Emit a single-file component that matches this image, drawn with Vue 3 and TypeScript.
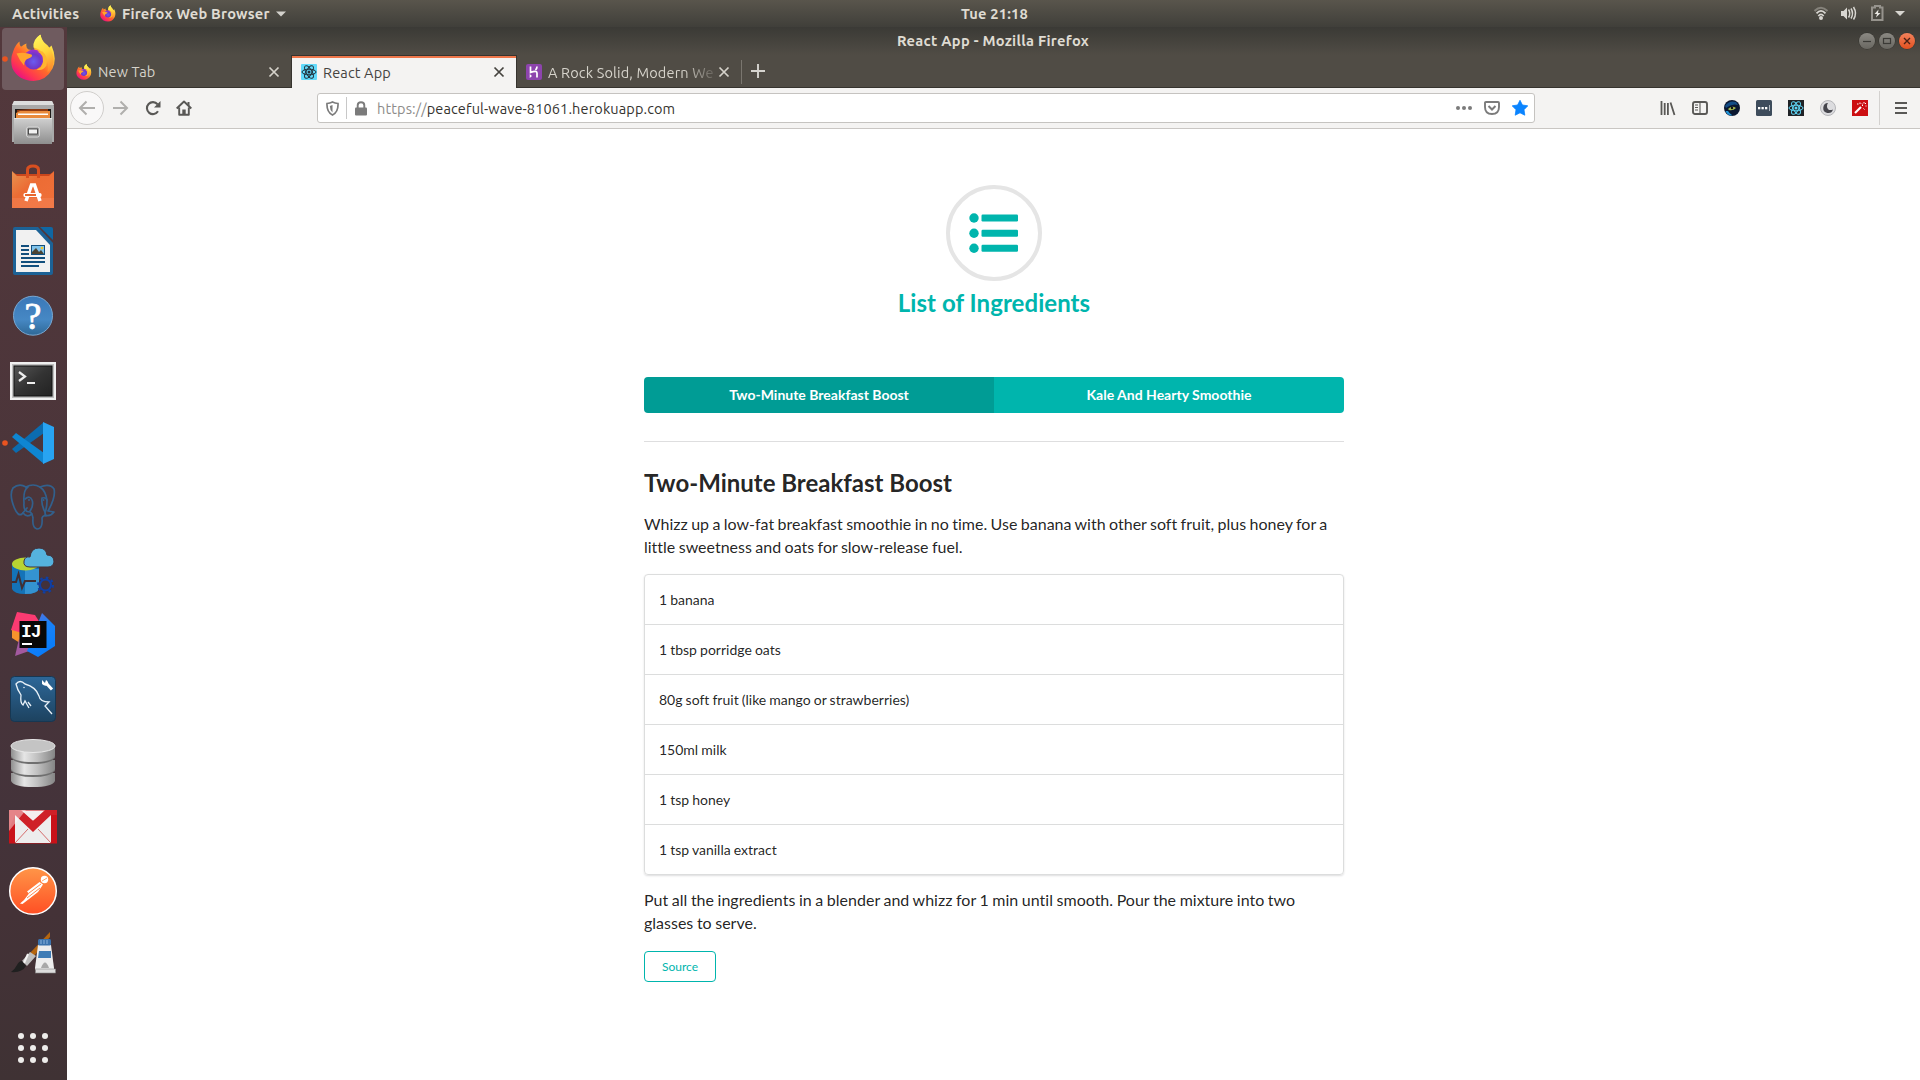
<script setup lang="ts">
interface Recipe {
  name: string
  summary: string
  ingredients: string[]
  method: string
}

const recipe: Recipe = {
  name: 'Two-Minute Breakfast Boost',
  summary:
    'Whizz up a low-fat breakfast smoothie in no time. Use banana with other soft fruit, plus honey for a little sweetness and oats for slow-release fuel.',
  ingredients: [
    '1 banana',
    '1 tbsp porridge oats',
    '80g soft fruit (like mango or strawberries)',
    '150ml milk',
    '1 tsp honey',
    '1 tsp vanilla extract',
  ],
  method:
    'Put all the ingredients in a blender and whizz for 1 min until smooth. Pour the mixture into two glasses to serve.',
}

const choices: string[] = [recipe.name, 'Kale And Hearty Smoothie']
const gridDots: number[] = [21, 33, 45]
</script>

<template>
  <div class="desktop">
    <svg width="0" height="0" class="defs">
      <defs>
        <linearGradient id="fxBody" x1="0.85" y1="0.1" x2="0.2" y2="0.95">
          <stop offset="0" stop-color="#fff44f" />
          <stop offset="0.3" stop-color="#ffb932" />
          <stop offset="0.55" stop-color="#ff6a2a" />
          <stop offset="0.8" stop-color="#ff3750" />
          <stop offset="1" stop-color="#e80f85" />
        </linearGradient>
        <linearGradient id="fxFlame" x1="0.3" y1="0" x2="0.6" y2="1">
          <stop offset="0" stop-color="#fff65a" />
          <stop offset="0.5" stop-color="#ffd53c" />
          <stop offset="1" stop-color="#ff8a2c" />
        </linearGradient>
        <radialGradient id="fxGlobe" cx="0.5" cy="0.6" r="0.6">
          <stop offset="0" stop-color="#6a5cf0" />
          <stop offset="0.6" stop-color="#6f38c8" />
          <stop offset="1" stop-color="#a22fd0" />
        </radialGradient>
        <symbol id="firefox" viewBox="0 0 46 47">
          <path d="M3 16 Q5 10 9 7 Q9 12 11 12 Q13 10 16 9 Q15 13 18 15 L24 16 Q22 6 30 0 Q31 7 37 11 L38 14 L41 11 Q47 24 42 34 Q36 46 23 46.500 Q8 46 2 34 Q-1 25 3 16Z" fill="url(#fxBody)" />
          <path d="M23 13 Q22 5 30 0 Q31 7 37 11 Q42 15 43 24 Q44 32 37 38 Q39 29 34 21 Q30 14 23 13Z" fill="url(#fxFlame)" />
          <circle cx="23" cy="25" r="10" fill="url(#fxGlobe)" />
          <path d="M6 19 Q13 17 21 20 Q23 22 18 24 Q14 25 13.500 31 Q9 26 6 19Z" fill="#ffa52d" />
          <path d="M27 17 Q33 20 32.500 27 Q32 33 26 35 Q32 37 36 31 Q38 22 32 17Z" fill="#ffb52f" />
        </symbol>
        <symbol id="atom" viewBox="0 0 16 16">
          <g fill="none" stroke="currentColor" stroke-width="1">
            <ellipse cx="8" cy="8" rx="7" ry="2.800" />
            <ellipse cx="8" cy="8" rx="7" ry="2.800" transform="rotate(60 8 8)" />
            <ellipse cx="8" cy="8" rx="7" ry="2.800" transform="rotate(120 8 8)" />
          </g>
          <circle cx="8" cy="8" r="1.500" fill="currentColor" />
        </symbol>
        <symbol id="cross" viewBox="0 0 12 12">
          <path d="M1.500 1.500 L10.500 10.500 M10.500 1.500 L1.500 10.500" stroke="currentColor" stroke-width="1.700" fill="none" />
        </symbol>
        <linearGradient id="grey" x1="0" y1="0" x2="0" y2="1"><stop offset="0" stop-color="#d0d0d0" /><stop offset="1" stop-color="#8e8e8e" /></linearGradient>
        <linearGradient id="metal" x1="0" y1="0" x2="1" y2="0"><stop offset="0" stop-color="#8f8f8f" /><stop offset="0.3" stop-color="#e6e6e6" /><stop offset="0.6" stop-color="#c0c0c0" /><stop offset="1" stop-color="#858585" /></linearGradient>
        <linearGradient id="bag" x1="0" y1="0" x2="1" y2="1"><stop offset="0" stop-color="#e89350" /><stop offset="0.4" stop-color="#ec6c34" /><stop offset="1" stop-color="#f0703a" /></linearGradient>
        <linearGradient id="help" x1="0" y1="0" x2="0" y2="1"><stop offset="0" stop-color="#3a78b8" /><stop offset="0.6" stop-color="#4688c4" /><stop offset="1" stop-color="#2e6896" /></linearGradient>
        <linearGradient id="term" x1="0" y1="0" x2="1" y2="1"><stop offset="0" stop-color="#555" /><stop offset="0.5" stop-color="#333" /><stop offset="1" stop-color="#222" /></linearGradient>
        <linearGradient id="mysql" x1="0" y1="0" x2="0" y2="1"><stop offset="0" stop-color="#2d6798" /><stop offset="1" stop-color="#1d425f" /></linearGradient>
        <linearGradient id="postman" x1="0" y1="0" x2="0" y2="1"><stop offset="0" stop-color="#ff9648" /><stop offset="1" stop-color="#ff4f24" /></linearGradient>
        <linearGradient id="ijBlue" x1="0" y1="0" x2="0.5" y2="1"><stop offset="0" stop-color="#6a6ad0" /><stop offset="0.5" stop-color="#1a82f8" /><stop offset="1" stop-color="#087cfa" /></linearGradient>
      </defs>
    </svg>

    <header class="panel">
      <div class="panel-left">
        <span class="activities">Activities</span>
        <svg class="panel-fox" width="16" height="17"><use href="#firefox" /></svg>
        <span class="app-name">Firefox Web Browser</span>
        <svg class="caret" width="10" height="6" viewBox="0 0 10 6"><path d="M0 0.500H10L5 5.500Z" fill="#d3d1cc" /></svg>
      </div>
      <span class="clock">Tue 21:18</span>
      <div class="panel-right">
        <svg width="106" height="27" viewBox="0 0 106 27">
          <g fill="none">
            <path d="M0.500 11 Q7 4.500 13.500 11" stroke="#85827b" stroke-width="2" />
            <path d="M2.500 13.300 Q7 8.500 11.500 13.300" stroke="#d8d6d1" stroke-width="1.800" />
            <path d="M4.300 16 Q7 12.800 9.700 16" stroke="#d8d6d1" stroke-width="1.600" />
            <path d="M34.500 9.500 Q37 13.500 34.500 17.500 M37 8.500 Q40 13.500 37 18.500 M39.500 7 Q43.500 13.500 39.500 19.500" stroke="#d8d6d1" stroke-width="1.500" />
            <path d="M58 7.500 H61 V6 H66 V7.500 H68.500 V20 H58Z" stroke="#96938d" stroke-width="2" />
          </g>
          <circle cx="7" cy="18" r="2" fill="#d8d6d1" />
          <path d="M27 11 H29.500 L33 7.500 V19.500 L29.500 16 H27Z" fill="#d8d6d1" />
          <path d="M64.500 9.500 L60.500 14 H63 L62 17.500 L66.500 13 H64Z" fill="#e8e6e1" />
          <path d="M81 11 H91 L86 16Z" fill="#d8d6d1" />
        </svg>
      </div>
    </header>

    <div class="work">
      <nav class="dock">
        <svg class="app running focused" viewBox="0 0 67 64">
          <rect x="2" y="1" width="62" height="62" rx="4" fill="#6f5b5f" />
          <circle cx="5" cy="32" r="2.800" fill="#e95420" />
          <use href="#firefox" x="10.500" y="7.500" width="46" height="47" />
        </svg>
        <svg class="app" viewBox="0 0 67 64">
          <path d="M14 10 H52 L54 15 V51 H12 V15Z" fill="#a9a9a9" />
          <path d="M14 10 H52 L54 14 H12Z" fill="#ddd" />
          <rect x="15" y="18" width="36" height="12" fill="#1e1a18" />
          <path d="M17 19 L31 18 H48 V27 H17Z" fill="#8f3a12" />
          <path d="M16 22 L20 20 H50 V27 H16Z" fill="#e98a3c" />
          <rect x="18" y="22.500" width="30" height="1.500" fill="#fff" />
          <rect x="14" y="27" width="38" height="26" fill="url(#grey)" />
          <rect x="14" y="27" width="38" height="1" fill="#e6e6e6" />
          <rect x="26.500" y="36" width="13" height="10" rx="2" fill="#999" stroke="#d8d8d8" />
          <rect x="28.500" y="38" width="9" height="5" fill="#f2f2f2" stroke="#333" stroke-width="0.800" />
        </svg>
        <svg class="app" viewBox="0 0 67 64">
          <path d="M12 17 L16 19 H50 L54 17 V23 H12Z" fill="#c9461c" />
          <path d="M12 16 L17 21 H49 L54 16 V53 H12Z" fill="url(#bag)" />
          <rect x="12" y="43" width="42" height="10" fill="#f58a5e" opacity="0.400" />
          <path d="M27.500 23 V15 Q27.500 11 33 11 Q38.500 11 38.500 15 V23" fill="none" stroke="#d84f20" stroke-width="3" />
          <path d="M26 46 L31.500 30 H34.500 L40 46" fill="none" stroke="#fff" stroke-width="3.500" />
          <rect x="23.500" y="38" width="18" height="4" rx="1.500" fill="#fff" />
          <rect x="25" y="39" width="11" height="2" fill="#e8682f" />
        </svg>
        <svg class="app" viewBox="0 0 67 64">
          <path d="M15 8 H38 L53 24 V54 Q53 56 51 56 H15 Q13 56 13 54 V10 Q13 8 15 8Z" fill="#1c6296" />
          <path d="M16 11 H36 L50 26 V53 H16Z" fill="#f1f1f1" />
          <path d="M40 8 H51 Q53 8 53 10 V21Z" fill="#0f67a3" />
          <g fill="#124f7d">
            <rect x="21" y="26" width="8" height="2" /><rect x="21" y="30" width="8" height="2" /><rect x="21" y="34" width="8" height="2" />
            <rect x="21" y="38" width="24" height="2" /><rect x="21" y="42" width="24" height="2" /><rect x="21" y="46" width="18" height="2" />
            <rect x="31" y="26" width="14" height="10" />
          </g>
          <rect x="32" y="27" width="12" height="8" fill="#80c3ea" />
          <path d="M32 35 V33 L36 29 L39 33 L41 31 L44 35Z" fill="#4b4434" /><circle cx="42" cy="29" r="1.300" fill="#f3c623" />
        </svg>
        <svg class="app" viewBox="0 0 67 64">
          <circle cx="33" cy="32.700" r="19.500" fill="url(#help)" stroke="#79a8d2" stroke-width="1" />
          <text x="33" y="45.500" text-anchor="middle" class="help-mark">?</text>
        </svg>
        <svg class="app" viewBox="0 0 67 64">
          <rect x="10" y="15" width="46" height="38" rx="1" fill="#bebebe" />
          <rect x="11" y="16" width="44" height="36" fill="none" stroke="#f0f0f0" stroke-width="2" />
          <rect x="14" y="19" width="38" height="30" fill="url(#term)" stroke="#111" />
          <path d="M19 25 L25 29.500 L19 34" fill="none" stroke="#eee" stroke-width="2.200" />
          <rect x="27" y="35" width="8" height="2" fill="#eee" />
        </svg>
        <svg class="app running" viewBox="0 0 67 64">
          <circle cx="5" cy="32" r="2.800" fill="#e95420" />
          <path d="M12 38 L16 42 L44 22 V11Z" fill="#0b6cb0" />
          <path d="M12 26 L16 22 L44 42 V53Z" fill="#0e86d2" />
          <path d="M43 11 L54 16 V48 L43 53 Z" fill="#28a4f2" />
        </svg>
        <svg class="app" viewBox="0 0 67 64">
          <g fill="none" stroke="#32608c" stroke-width="1.700" stroke-linejoin="round" stroke-linecap="round">
            <path d="M26 12 Q19 8 13 13 Q9 19 14 32 Q18 42 22 39 L27 33" />
            <path d="M26 12 Q33 8 40 12 Q46 16 47 26 Q47 32 45 38 L46 41 Q43 40 42 43 Q43 54 37 54 Q32 53 33 43 Q32 38 30 37 Q23 37 24 28 Q23 15 28 12" />
            <path d="M40 12 Q50 8 54 14 Q56 22 48 36 L54 37 Q50 42 45 40" />
            <path d="M25 24 Q30 20 32 25 Q34 30 30 36" />
            <path d="M42 23 Q46 22 47 25 M42 23 Q41 30 45 37" />
            <path d="M23 38 Q27 43 32 39" />
          </g>
          <circle cx="29" cy="25" r="1" fill="#32608c" /><circle cx="43.500" cy="25" r="1" fill="#32608c" />
        </svg>
        <svg class="app" viewBox="0 0 67 64">
          <path d="M12 24 V50 Q14 55 25 55 Q38 55 39 49 V24Z" fill="#1473b8" />
          <path d="M25 30 H39 V49 Q38 55 25 55Z" fill="#3c9bd8" opacity="0.800" />
          <ellipse cx="25.500" cy="25" rx="13.500" ry="6.500" fill="#b8d432" />
          <path d="M12 43 H16 L18.500 35 L22 49 L25 42 H36" fill="none" stroke="#402f34" stroke-width="2" />
          <path d="M30 28 Q23 28 24 22 Q25 17 30 18 Q31 9 39 9 Q46 9 47 16 Q54 16 54 23 Q53 28 48 28Z" fill="#55b2de" stroke="#43313a" stroke-width="1" />
          <circle cx="45.500" cy="46" r="7" fill="#43313a" />
          <circle cx="45.500" cy="46" r="5.500" fill="none" stroke="#0f3fa4" stroke-width="2" />
          <circle cx="45.500" cy="46" r="7.400" fill="none" stroke="#0f3fa4" stroke-width="2.200" stroke-dasharray="2.600 3.212" />
        </svg>
        <svg class="app" viewBox="0 0 67 64">
          <path d="M17 9 L35 12 L42 23 L19 31 L11 27Z" fill="#fc3b72" />
          <path d="M12 27 L22 30 L20 40 L12 35Z" fill="#f6942c" />
          <path d="M19 36 L15 53 L32 47Z" fill="#a3599f" />
          <path d="M42 10 L55 23 V43 L38 54 L27 48 L38 20Z" fill="url(#ijBlue)" />
          <rect x="19.500" y="18" width="27" height="27" fill="#080808" />
          <rect x="22" y="40" width="10" height="2" fill="#fff" />
          <text x="21" y="33.500" class="ij-mark">IJ</text>
        </svg>
        <svg class="app" viewBox="0 0 67 64">
          <rect x="10.500" y="9.500" width="45" height="45" rx="4" fill="url(#mysql)" stroke="#173752" />
          <path d="M29 42 L25 35 L23 39 Q20 37 21 29 Q17 23 16 18 Q20 13 25 18 Q36 21 39 30 Q40 36 49 36 L45 40 L52 48 M31 40 L28 36" transform="translate(0,-1)" fill="none" stroke="#e8f1f8" stroke-width="1.300" />
          <path d="M46 16 L52 22.500" stroke="#fff" stroke-width="3" fill="none" />
          <path d="M42 13 L45 16 L46 13 Q49 15 48 18 Q45 20 42 17Z" fill="#fff" />
          <circle cx="24" cy="20.500" r="0.700" fill="#fff" />
        </svg>
        <svg class="app" viewBox="0 0 67 64">
          <path d="M11 42 V50 Q14 56 33 56 Q52 56 55 50 V42Z" fill="url(#metal)" />
          <path d="M11 40 Q16 46 33 46 Q50 46 55 40 V37 H11Z" fill="#6f6f6f" />
          <path d="M11 29 V38 Q14 44 33 44 Q52 44 55 38 V29Z" fill="url(#metal)" />
          <path d="M11 27 Q16 33 33 33 Q50 33 55 27 V24 H11Z" fill="#6f6f6f" />
          <path d="M11 15 V25 Q14 31 33 31 Q52 31 55 25 V15Z" fill="url(#metal)" />
          <ellipse cx="33" cy="15" rx="22" ry="6.500" fill="#c4c4c4" stroke="#e8e8e8" stroke-width="1" />
        </svg>
        <svg class="app" viewBox="0 0 67 64">
          <rect x="9" y="15" width="48" height="33.500" fill="#c91219" />
          <path d="M15 19 L33 33 L51 19 V48 H15Z" fill="#ededed" />
          <path d="M20 15.500 H46 L33 26Z" fill="#f5eeee" />
          <path d="M15 48 L28 34 M51 48 L38 34" stroke="#d56b6b" stroke-width="1" />
          <path d="M9 15 H21 L33 26 L45 15 H57 V20 L51 20 L33 37 L15 20 L9 34Z" fill="#cf2027" />
          <path d="M9 15 H26 L9 36Z" fill="#fff" opacity="0.450" />
        </svg>
        <svg class="app" viewBox="0 0 67 64">
          <circle cx="33" cy="32" r="23.300" fill="url(#postman)" stroke="#fff" stroke-width="1.500" />
          <circle cx="44.500" cy="20.500" r="3.700" fill="#fff" />
          <path d="M42 22 L47 19" stroke="#ff8d45" stroke-width="0.800" />
          <path d="M39.500 23 L27 32.500 L29 34.500 L24 41 L20 44.500 L22.500 45 L29 40 L38 33 L43 25.500Z" fill="#fff" />
          <path d="M29 34 L41 25 M27 39 L40 29" stroke="#ff7b3a" stroke-width="0.900" />
        </svg>
        <svg class="app" viewBox="0 0 67 64">
          <path d="M50 9 L30 30 L34 33 L50 14Z" fill="#b4650f" />
          <path d="M30 29 L36 33 L27 43 L22 38Z" fill="#bebebe" />
          <path d="M28 31 L24 40" stroke="#f4f4f4" stroke-width="2" />
          <path d="M22 38 L26 43 Q22 50 11 49 Q15 46 17 42 Q19 38 22 38Z" fill="#202020" />
          <path d="M38 22 H51 L54 45 V47 H35 V45Z" fill="#ededed" />
          <rect x="38" y="16" width="13" height="6.500" rx="1.500" fill="#3b73ad" />
          <path d="M41 17 V21 M44 17 V21 M47 17 V21" stroke="#8db4dc" stroke-width="1" />
          <path d="M39 28 H51 V35 H38Z" fill="#3f7cb5" />
          <path d="M41 45 Q45 34 49 45Z" fill="#a8a8a8" />
          <rect x="35.500" y="46" width="20" height="4" fill="#ddd" stroke="#888" stroke-width="0.600" />
        </svg>
        <svg class="show-apps" viewBox="0 0 67 64">
          <template v-for="gx in gridDots" :key="gx">
            <circle v-for="gy in gridDots" :key="gy" :cx="gx" :cy="gy - 1" r="3" fill="#eeedeb" />
          </template>
        </svg>
      </nav>

      <main class="browser">
        <div class="titlebar">
          <span class="window-title">React App - Mozilla Firefox</span>
          <div class="controls">
            <span class="ctl"><svg viewBox="0 0 16 16"><path d="M4 8.500H12" stroke="#3b3a36" stroke-width="1.200" /></svg></span>
            <span class="ctl"><svg viewBox="0 0 16 16"><rect x="4.500" y="5.500" width="7" height="5" fill="none" stroke="#3b3a36" stroke-width="1.200" /></svg></span>
            <span class="ctl close"><svg viewBox="0 0 16 16"><path d="M5 5L11 11M11 5L5 11" stroke="#4a2014" stroke-width="1.400" /></svg></span>
          </div>
        </div>

        <div class="tabs">
          <div class="tab first">
            <svg width="16" height="16"><use href="#firefox" /></svg>
            <span class="tab-label">New Tab</span>
            <svg class="x" width="12" height="12"><use href="#cross" /></svg>
          </div>
          <div class="tab active">
            <span class="react-fav"><svg width="16" height="16"><use href="#atom" /></svg></span>
            <span class="tab-label">React App</span>
            <svg class="x" width="12" height="12"><use href="#cross" /></svg>
          </div>
          <div class="tab third">
            <svg width="16" height="16" viewBox="0 0 16 16"><rect width="16" height="16" rx="2" fill="#8d44ad" /><path d="M4.500 2.500V8.500Q11 6 11 9V13.500M11 2.500Q11 4.500 9.500 6" fill="none" stroke="#fff" stroke-width="1.700" /><path d="M3.700 10V14L6 12Z" fill="#fff" /></svg>
            <span class="tab-label faded">A Rock Solid, Modern We</span>
            <svg class="x" width="12" height="12"><use href="#cross" /></svg>
          </div>
          <svg class="plus" width="14" height="14" viewBox="0 0 14 14"><path d="M7 0V14M0 7H14" stroke="#d6d4cf" stroke-width="1.900" /></svg>
        </div>

        <div class="toolbar">
          <div class="nav-buttons">
            <span class="back"><svg width="18" height="16" viewBox="0 0 18 16"><path d="M17 8H2M8.500 1.500L2 8L8.500 14.500" fill="none" stroke="#b0afad" stroke-width="2" /></svg></span>
            <svg class="forward" width="18" height="16" viewBox="0 0 18 16"><path d="M1 8H15M8.500 1.500L15 8L8.500 14.500" fill="none" stroke="#b0afad" stroke-width="2" /></svg>
            <svg class="reload" width="16" height="16" viewBox="0 0 16 16"><path d="M13 11.300A6 6 0 1 1 12.500 4.200" fill="none" stroke="#595856" stroke-width="2.100" /><path d="M15.500 1V7.500H9Z" fill="#595856" /></svg>
            <svg class="home" width="16" height="16" viewBox="0 0 16 16"><path d="M0.700 8.500L8 1.500L15.300 8.500M3.200 7.500V14.700H12.800V7.500" fill="none" stroke="#595856" stroke-width="1.900" stroke-linejoin="round" /><path d="M6.300 15V9.500H9.700V15Z" fill="#595856" /><path d="M11.500 2H13.500V6L11.500 4Z" fill="#595856" /></svg>
          </div>
          <div class="urlbar">
            <svg class="shield" width="13" height="15" viewBox="0 0 13 15"><path d="M1 2.500Q4 2.300 6.500 1Q9 2.300 12 2.500Q12.500 11 6.500 14Q0.500 11 1 2.500Z" fill="none" stroke="#7b7b7b" stroke-width="1.700" /><path d="M6.500 4V11.500Q3.800 9 3.800 5Z" fill="#7b7b7b" /></svg>
            <span class="rule"></span>
            <svg class="lock" width="12" height="15" viewBox="0 0 12 15"><rect x="0" y="6.500" width="12" height="8" rx="1" fill="#7b7b7b" /><path d="M2.700 7V4.300Q2.700 1.200 6 1.200Q9.300 1.200 9.300 4.300V7" fill="none" stroke="#7b7b7b" stroke-width="1.900" /></svg>
            <span class="address"><span class="scheme">https://</span>peaceful-wave-81061.herokuapp.com</span>
            <svg class="dots" width="16" height="4" viewBox="0 0 16 4"><circle cx="2" cy="2" r="2" fill="#7b7b7b" /><circle cx="8" cy="2" r="2" fill="#7b7b7b" /><circle cx="14" cy="2" r="2" fill="#7b7b7b" /></svg>
            <svg class="pocket" width="16" height="14" viewBox="0 0 16 14"><path d="M1 2Q1 1 2 1H14Q15 1 15 2V6Q15 13 8 13Q1 13 1 6Z" fill="none" stroke="#7b7b7b" stroke-width="1.900" /><path d="M4.500 5L8 8.500L11.500 5" fill="none" stroke="#7b7b7b" stroke-width="2" /></svg>
            <svg class="star" width="16" height="16" viewBox="0 0 16 16"><path d="M8 0.300L10.400 5L15.800 5.800L12 9.700L12.800 15.200L8 12.800L3.200 15.200L4 9.700L0.200 5.800L5.600 5Z" fill="#0a84ff" stroke="#0a84ff" stroke-linejoin="round" stroke-width="0.800" /></svg>
          </div>
          <div class="extensions">
            <svg viewBox="0 0 16 16"><path d="M2 1V15M5.200 3V15M8.400 3V15M11 2.500L15 15" transform="translate(-0.500,0)" fill="none" stroke="#595856" stroke-width="1.800" /></svg>
            <svg viewBox="0 0 16 16"><rect x="1" y="2" width="14" height="12" rx="2" fill="none" stroke="#595856" stroke-width="1.900" /><path d="M8 2V14M3 5H6M3 7.500H6M3 10H6" stroke="#595856" stroke-width="1.100" /></svg>
            <svg viewBox="0 0 16 16"><circle cx="8" cy="8" r="8" fill="#0a1730" /><path d="M1 6Q5 0 12 2L14 5Q8 3 2 8Z" fill="#124c86" /><path d="M4 9Q8 5 12 8Q9 11 5 10Z" fill="#a3ba50" /><path d="M1.500 11Q3 15.500 8.500 15.500Q5 13 4 11Z" fill="#1f93d8" /><circle cx="8" cy="8" r="1.200" fill="#111" /></svg>
            <svg viewBox="0 0 16 16"><rect width="16" height="16" rx="1.500" fill="#3e4c5c" /><rect x="2" y="7" width="2.300" height="2.300" fill="#fff" /><rect x="5.500" y="7" width="2.300" height="2.300" fill="#fff" /><rect x="9" y="7" width="2.300" height="2.300" fill="#fff" /><rect x="13" y="5" width="1" height="6" fill="#aeb6bf" /></svg>
            <svg viewBox="0 0 16 16" class="devtools"><rect width="16" height="16" fill="#202226" /><use href="#atom" width="16" height="16" /></svg>
            <svg viewBox="0 0 16 16"><circle cx="8" cy="8" r="7.500" fill="#dcdcdf" stroke="#b5b5b9" /><path d="M8 3A5 5 0 1 0 13 9.500Q8 11.500 7 7Q6.800 4.500 8 3Z" fill="#45454c" /></svg>
            <svg viewBox="0 0 16 16"><rect width="16" height="16" fill="#cc0f12" /><path d="M3 13L9 7" stroke="#fff" stroke-width="2.200" /><path d="M10 6L11 5M8 2.500V4M12 2V3.500M13.500 6H14.500M11.500 8.500L12.500 9.500M5 4H6.500M10 3.500L10.500 4.500M13 4L14 3" stroke="#fff" stroke-width="1" /></svg>
          </div>
          <div class="menu">
            <svg width="12" height="12" viewBox="0 0 12 12"><path d="M0 1H12M0 6H12M0 11H12" stroke="#595856" stroke-width="1.900" /></svg>
          </div>
        </div>

        <section class="page">
          <div class="container">
            <div class="icon-ring">
              <svg width="50" height="42" viewBox="0 0 50 42">
                <g fill="#00b5ad">
                  <circle cx="5" cy="6" r="4.700" /><circle cx="5" cy="21.200" r="4.700" /><circle cx="5" cy="36.300" r="4.700" />
                  <rect x="12.500" y="2.500" width="36.500" height="7" rx="1.200" /><rect x="12.500" y="17.700" width="36.500" height="7" rx="1.200" /><rect x="12.500" y="32.800" width="36.500" height="7" rx="1.200" />
                </g>
              </svg>
            </div>
            <h2 class="page-title">List of Ingredients</h2>

            <div class="buttons">
              <button v-for="(choice, i) in choices" :key="choice" type="button" :class="{ selected: i === 0 }">{{ choice }}</button>
            </div>
            <div class="divider"></div>

            <h2 class="recipe-name">{{ recipe.name }}</h2>
            <p class="summary">{{ recipe.summary }}</p>
            <div class="segments">
              <div v-for="item in recipe.ingredients" :key="item" class="segment">{{ item }}</div>
            </div>
            <p class="method">{{ recipe.method }}</p>
            <button type="button" class="source">Source</button>
          </div>
        </section>
      </main>
    </div>
  </div>
</template>

<style>
body {
  margin: 0;
  overflow: hidden;
}
</style>

<style scoped>
.desktop {
  width: 1920px;
  height: 1080px;
  overflow: hidden;
  display: flex;
  flex-direction: column;
  background: #fff;
  font-family: Ubuntu, 'Noto Sans', sans-serif;
}
svg {
  display: block;
  flex: none;
}
.defs {
  position: absolute;
}
.panel {
  height: 27px;
  flex: none;
  display: grid;
  grid-template-columns: 961px auto 1fr;
  align-items: center;
  background: linear-gradient(#59554c, #403f3a);
  color: #dfdbd2;
  font-size: 14.67px;
  letter-spacing: 0.2px;
  font-weight: 600;
  line-height: 27px;
  white-space: nowrap;
}
.panel-left {
  display: flex;
  align-items: center;
  padding-left: 12px;
}
.activities {
  width: 68px;
}
.panel-fox {
  margin-left: 20px;
}
.app-name {
  margin-left: 6px;
  width: 149px;
}
.caret {
  margin-left: 5px;
}
.panel-right {
  display: flex;
  justify-content: flex-end;
}
.work {
  flex: 1;
  min-height: 0;
  display: flex;
}
.dock {
  width: 67px;
  flex: none;
  display: flex;
  flex-direction: column;
  background: linear-gradient(#53383c, #4b353a 45%, #44333a 75%, #443237 84%, #3f3234);
}
.app,
.show-apps {
  width: 67px;
  height: 64px;
}
.show-apps {
  margin-top: 29px;
}
.help-mark {
  font: 400 38px 'Liberation Serif', serif;
  fill: #fff;
  stroke: #fff;
  stroke-width: 0.8px;
}
.ij-mark {
  font: 700 18px 'Liberation Mono', monospace;
  letter-spacing: -1px;
  fill: #fff;
}
.browser {
  flex: 1;
  min-width: 0;
  display: flex;
  flex-direction: column;
}
.titlebar {
  height: 28px;
  flex: none;
  display: grid;
  grid-template-columns: auto 1fr;
  align-items: center;
  padding-left: 830px;
  background: linear-gradient(#3b3a36, #3d3c37 12%, #504c45);
  color: #dfdbd2;
  font-size: 14.67px;
  letter-spacing: 0.26px;
  font-weight: 600;
  line-height: 28px;
  white-space: nowrap;
}
.controls {
  display: flex;
  justify-content: flex-end;
  gap: 4px;
  padding-right: 5px;
}
.ctl {
  width: 16px;
  height: 16px;
  border-radius: 50%;
  background: linear-gradient(#8b8983, #696761);
  box-shadow: 0 0 0 0.5px #33322e;
}
.ctl.close {
  background: linear-gradient(#f2825c, #e2501f);
}
.tabs {
  height: 33px;
  flex: none;
  display: flex;
  background: #504c45;
  box-shadow: inset 0 -1px #36332e;
  color: #d6d3cb;
  font-size: 14.5px;
  letter-spacing: 0.15px;
}
.tab {
  display: flex;
  align-items: center;
  box-sizing: border-box;
  white-space: nowrap;
}
.tab-label {
  flex: 1;
  margin-left: 6px;
}
.first {
  width: 224px;
  padding: 0 11px 0 9px;
}
.active {
  width: 226px;
  padding: 0 11px 0 9px;
  background: #f4f3f2;
  color: #45433f;
  border: 1px solid #36332e;
  border-bottom: 0;
  box-shadow: inset 0 2px #ee764a;
}
.third {
  width: 225px;
  padding: 0 11px 0 9px;
  border-right: 1px solid #7a766f;
  height: 24px;
  margin-top: 5px;
}
.faded {
  overflow: hidden;
  mask-image: linear-gradient(90deg, #000 135px, transparent 172px);
}
.plus {
  margin: 9px 0 0 9px;
}
.react-fav {
  background: #61dafb;
  color: #20303a;
  border-radius: 1px;
}
.toolbar {
  height: 40px;
  flex: none;
  display: flex;
  align-items: center;
  background: #f4f3f2;
  border-bottom: 1px solid #c9c6c3;
}
.nav-buttons {
  width: 250px;
  display: flex;
  align-items: center;
}
.back {
  width: 32px;
  height: 32px;
  margin-left: 3px;
  border: 1px solid #d0cecc;
  border-radius: 50%;
  background: #f9f8f8;
  display: flex;
  align-items: center;
  justify-content: center;
}
.forward {
  margin-left: 8px;
}
.reload {
  margin-left: 15px;
}
.home {
  margin-left: 15px;
}
.urlbar {
  width: 1218px;
  height: 30px;
  box-sizing: border-box;
  border: 1px solid #c5c3c0;
  border-radius: 3px;
  background: #fff;
  display: flex;
  align-items: center;
  padding: 0 6px 0 8px;
  font-size: 14.5px;
  letter-spacing: 0.13px;
  color: #35332f;
}
.rule {
  width: 1px;
  height: 22px;
  margin: 0 8px 0 7px;
  background: #c8c8c8;
}
.address {
  flex: 1;
  margin-left: 10px;
  padding-top: 1px;
}
.scheme {
  color: #8d8c8a;
}
.pocket {
  margin-left: 12px;
}
.star {
  margin-left: 12px;
}
.extensions {
  display: flex;
  gap: 16px;
  margin-left: 125px;
}
.extensions svg {
  width: 16px;
  height: 16px;
}
.devtools {
  color: #5fd5f5;
}
.menu {
  margin-left: 11px;
  height: 34px;
  padding-left: 15px;
  border-left: 1px solid #d3d1cf;
  display: flex;
  align-items: center;
}
.page {
  flex: 1;
  min-height: 0;
  display: flex;
  justify-content: center;
  background: #fff;
  color: rgba(0, 0, 0, 0.87);
  font-family: Lato, sans-serif;
  font-variant-ligatures: none;
}
.container {
  width: 700px;
  padding-top: 56px;
  margin-left: 1px;
}
.icon-ring {
  box-sizing: border-box;
  width: 96px;
  height: 96px;
  margin: 0 auto;
  border: 4px solid #e5e5e5;
  border-radius: 50%;
  display: flex;
  align-items: center;
  justify-content: center;
}
h2 {
  margin: 0;
  font-size: 24px;
  font-weight: 700;
  line-height: 31px;
}
.page-title {
  margin-top: 6px;
  text-align: center;
  letter-spacing: 0.06px;
  color: #00b5ad;
}
.buttons {
  display: flex;
  height: 36px;
  margin-top: 59px;
  border-radius: 4px;
  overflow: hidden;
}
.buttons button {
  flex: 1;
  border: 0;
  padding: 0;
  background: #00b5ad;
  color: #fff;
  font: 700 14px/14px Lato, sans-serif;
}
.buttons .selected {
  background: #009c95;
}
.divider {
  height: 1px;
  margin-top: 28px;
  background: #dededf;
}
.recipe-name {
  margin-top: 25px;
}
p {
  margin: 0;
  font-size: 16px;
  line-height: 22.85px;
}
.summary {
  margin-top: 15px;
  word-spacing: -0.68px;
}
.segments {
  margin-top: 15.3px;
  border: 1px solid #dcdddd;
  border-radius: 4px;
  box-shadow: 0 1px 2px rgba(34, 36, 38, 0.15);
}
.segment {
  padding: 14px;
  font-size: 14px;
  line-height: 21px;
  word-spacing: -0.5px;
}
.segment + .segment {
  border-top: 1px solid #dcdddd;
}
.method {
  margin-top: 14px;
  word-spacing: -0.5px;
}
.source {
  margin-top: 16px;
  width: 72px;
  height: 31px;
  border: 1px solid #00b5ad;
  border-radius: 4px;
  background: #fff;
  color: #00b5ad;
  font: 12px/12px Lato, sans-serif;
  padding: 1px 0 0;
}
</style>
